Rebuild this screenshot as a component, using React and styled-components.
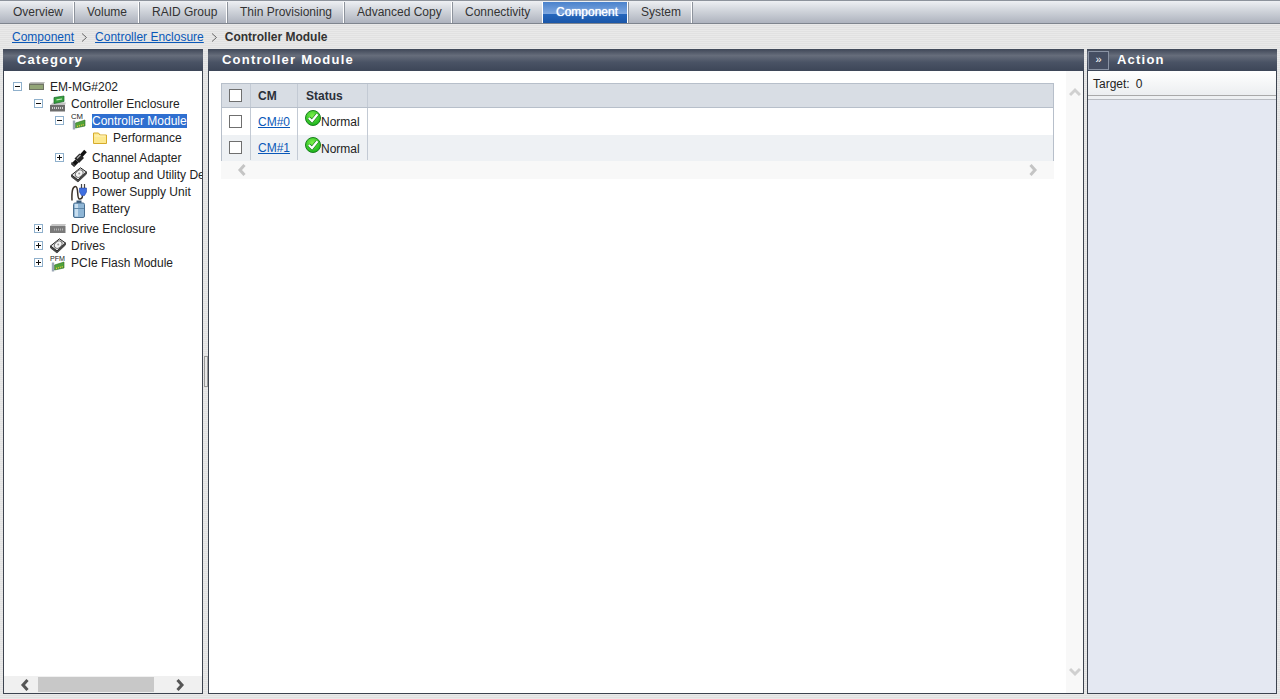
import React from 'react'
import styled, { createGlobalStyle } from 'styled-components'

const Global = createGlobalStyle`
  html, body { margin: 0; padding: 0; height: 100%; overflow: hidden; }
  body { font-family: "Liberation Sans", Arial, sans-serif; font-size: 12px; color: #222; }
`
const Page = styled.div`
  width: 1280px;
  height: 699px;
  display: flex;
  flex-direction: column;
  background: repeating-linear-gradient(#e9e9e9 0, #e9e9e9 1px, #e1e1e1 1px, #e1e1e1 2px);
`
const TabBar = styled.div`
  height: 24px;
  box-sizing: border-box;
  display: flex;
  padding-top: 1px;
  background: linear-gradient(#eef0f3 0, #d3d7dd 40%, #aeb3be 100%);
  border-top: 1px solid #8d939c;
  border-bottom: 1px solid #7f858e;
`
const Tab = styled.div`
  box-sizing: border-box;
  width: ${p => p.$w}px;
  display: flex;
  align-items: center;
  padding: 0 0 1px 13px;
  border-right: 1px solid #fff;
  box-shadow: 1px 0 0 #8d939c;
  color: ${p => (p.$active ? '#fff' : '#333')};
  text-shadow: ${p => (p.$active ? '0 0 1px #fff' : 'none')};
  background: ${p => (p.$active ? 'linear-gradient(#4a82cc 0, #7fa8e0 56%, #2566bc 58%, #1a56a8 100%)' : 'transparent')};
`
const Crumbs = styled.div`
  height: 25px;
  display: flex;
  align-items: center;
  padding: 1px 0 0 12px;
  box-sizing: border-box;
`
const CrumbLink = styled.a`
  color: #0a58b8;
  text-decoration: underline;
`
const CrumbSep = styled.svg`
  width: 7px;
  height: 9px;
  margin: 1px 7px 0 7px;
`
const CrumbNow = styled.span`
  font-weight: bold;
  color: #333;
`
const Panels = styled.div`
  display: flex;
  height: 645px;
  padding-left: 3px;
`
const Panel = styled.section`
  box-sizing: border-box;
  width: ${p => p.$w}px;
  height: 100%;
  border: 1px solid #3c434f;
  border-top: none;
  display: flex;
  flex-direction: column;
  background: ${p => p.$bg || '#fff'};
`
const Head = styled.header`
  height: 22px;
  box-sizing: border-box;
  flex: none;
  margin: 0 -1px;
  display: flex;
  align-items: center;
  padding: 0 0 2px ${p => p.$pad || 14}px;
  color: #fff;
  font-size: 13px;
  font-weight: bold;
  letter-spacing: 1.22px;
  background: linear-gradient(#3f4757 0, #666d7b 30%, #4a5365 60%, #3d4658 100%);
`
const Splitter = styled.div`
  width: 5px;
  flex: none;
  display: flex;
  align-items: center;
  justify-content: center;
`
const Grip = styled.div`
  width: 2px;
  height: 29px;
  border: 1px solid #999;
  background: #e8e8e8;
`
const Gap = styled.div`
  width: 3px;
  flex: none;
`
const TreeArea = styled.div`
  flex: 1;
  overflow: hidden;
  padding: 7px 0 0 9px;
`
const Group = styled.div`
  margin-bottom: ${p => p.$after || 0}px;
`
const Row = styled.div`
  height: 17px;
  display: flex;
  align-items: center;
  padding-left: ${p => p.$level * 21}px;
  white-space: nowrap;
`
const Toggle = styled.span`
  box-sizing: border-box;
  width: 9px;
  height: 9px;
  flex: none;
  border: 1px solid #8fb0cc;
  background: #fff;
  position: relative;
  &::before {
    content: '';
    position: absolute;
    left: 1px;
    top: 3px;
    width: 5px;
    height: 1px;
    background: #111;
  }
  &::after {
    content: '';
    display: ${p => (p.$open ? 'none' : 'block')};
    position: absolute;
    left: 3px;
    top: 1px;
    width: 1px;
    height: 5px;
    background: #111;
  }
`
const NoToggle = styled.span`
  width: 9px;
  flex: none;
`
const IconSlot = styled.span`
  width: 16px;
  height: 16px;
  flex: none;
  margin: 0 5px 0 7px;
  display: block;
  svg { display: block; overflow: visible; }
`
const Label = styled.span`
  line-height: 14px;
  margin-top: 1px;
  color: ${p => (p.$sel ? '#fff' : '#222')};
  background: ${p => (p.$sel ? '#2f6fd0' : 'transparent')};
`
const HScroll = styled.div`
  height: 17px;
  flex: none;
  display: flex;
  align-items: center;
  background: #f0f0f0;
  padding-left: 15px;
`
const ScrollThumb = styled.div`
  width: 116px;
  height: 15px;
  background: #c8c8c8;
  margin: 0 20px 0 7px;
`
const Arrow = styled.svg`
  width: 12px;
  height: 12px;
  flex: none;
`
const CenterBody = styled.div`
  flex: 1;
  display: flex;
  min-height: 0;
`
const CenterMain = styled.div`
  flex: 1;
  padding: 12px 12px 0 12px;
`
const VScroll = styled.div`
  width: 17px;
  flex: none;
  background: #f8f8f8;
  display: flex;
  flex-direction: column;
  justify-content: space-between;
  align-items: center;
  padding: 15px 0 15px;
  box-sizing: border-box;
`
const Grid = styled.div`
  border: 1px solid #b7bfca;
  border-bottom: none;
  width: 833px;
  box-sizing: border-box;
`
const GridRow = styled.div`
  display: flex;
  height: ${p => p.$h}px;
  box-sizing: border-box;
  background: ${p => p.$bg};
  border-bottom: ${p => p.$line ? '1px solid #b7bfca' : 'none'};
  padding-bottom: ${p => p.$nudge || 0}px;
`
const Cell = styled.div`
  box-sizing: border-box;
  width: ${p => p.$w}px;
  display: flex;
  align-items: center;
  padding-left: ${p => p.$pad || 0}px;
  padding-bottom: ${p => p.$lift || 0}px;
  border-right: 1px solid #c3cad4;
  font-weight: ${p => (p.$head ? 'bold' : 'normal')};
  color: ${p => (p.$head ? '#2b303a' : '#222')};
`
const Check = styled.span`
  box-sizing: border-box;
  width: 13px;
  height: 13px;
  background: #fff;
  border: 1px solid #6f6f6f;
  margin-left: 7px;
`
const CellLink = styled.a`
  color: #0a58b8;
  text-decoration: underline;
`
const StatusIcon = styled.svg`
  width: 16px;
  height: 16px;
  margin: -5px 0 0 -1px;
  flex: none;
`
const StatusText = styled.span`
  margin-top: 2px;
`
const GridScroll = styled.div`
  width: 833px;
  height: 18px;
  background: #f8f8f8;
  display: flex;
  align-items: center;
  padding: 0 15px 0 15px;
  box-sizing: border-box;
  justify-content: space-between;
`
const ActionHeadBtn = styled.span`
  box-sizing: border-box;
  width: 21px;
  height: 19px;
  margin: 2px 8px 0 0;
  border: 1px solid #8a93a4;
  background: #454e62;
  display: flex;
  align-items: center;
  justify-content: center;
  font-size: 11px;
  font-weight: normal;
  letter-spacing: 0;
  padding-bottom: 2px;
`
const Target = styled.div`
  height: 25px;
  flex: none;
  box-sizing: border-box;
  padding: 1px 0 0 5px;
  display: flex;
  align-items: center;
  gap: 6px;
  background: linear-gradient(#fff, #eceef0);
  border-bottom: 1px solid #a9a9a9;
`
const TargetEdge = styled.div`
  height: 3px;
  flex: none;
  background: #eef0f2;
  border-bottom: 1px solid #b9bcc2;
`

const Chevron = ({ dir, color }) => {
  const d = {
    left: 'M8.5 1 L4 6 L8.5 11',
    right: 'M3.5 1 L8 6 L3.5 11',
    up: 'M1 9 L6 4 L11 9',
    down: 'M1 3 L6 8 L11 3',
  }[dir]
  return (
    <Arrow viewBox="0 0 12 12">
      <path d={d} fill="none" stroke={color} strokeWidth="3" />
    </Arrow>
  )
}

const EnclosureIcon = () => (
  <svg width="16" height="16" viewBox="0 0 16 16">
    <path d="M0 9 L3 6.5 L16 6.5 L15 9 Z" fill="#c4c4c4" />
    <rect x="0" y="9" width="15" height="6.5" fill="#6d6d6d" />
    <path d="M2 12 H13" stroke="#cfcfcf" strokeWidth="2" strokeDasharray="1 1" />
    <path d="M4 1.5 L14 0 L14 5.5 L4 7.5 Z" fill="#37a03c" stroke="#17642a" strokeWidth=".7" />
    <path d="M6.5 3.8 L12 3" stroke="#c6ecc0" strokeWidth="1.2" />
  </svg>
)

const RackIcon = () => (
  <svg width="16" height="16" viewBox="0 0 16 16">
    <path d="M0 4.5 L1.5 3 L16 3 L15 4.5 Z" fill="#bdbdbd" />
    <rect x="0" y="4.5" width="15" height="6.5" fill="#6f7464" />
    <path d="M1.5 8 H14" stroke="#b6d68a" strokeWidth="4" strokeDasharray="1 1" />
  </svg>
)

const DriveBoxIcon = () => (
  <svg width="16" height="16" viewBox="0 0 16 16">
    <path d="M0 5 L2 3 L16 3 L15 5 Z" fill="#c6c6c6" />
    <rect x="0" y="5" width="15.5" height="7" fill="#7a7a7a" />
    <path d="M4 8.5 H13" stroke="#b4b4b4" strokeWidth="2" strokeDasharray="1 1" />
  </svg>
)

const CardIcon = ({ text, w }) => (
  <svg width="16" height="16" viewBox="0 0 16 16">
    <text x="0" y="6" fontSize="8" fontFamily="Liberation Sans" fill="#222" textLength={w} lengthAdjust="spacingAndGlyphs">{text}</text>
    <path d="M4.5 10 L14 7 L14 13 L4.5 15 Z" fill="#4fa23a" stroke="#2c6a20" strokeWidth=".6" />
    <path d="M3 7.5 V16.5" stroke="#9aa7b5" strokeWidth="2.4" />
    <path d="M6 13.5 L13 11.5" stroke="#e6c83c" strokeWidth="1.4" strokeDasharray="1 1" />
  </svg>
)

const FolderIcon = () => (
  <svg width="16" height="16" viewBox="0 0 16 16">
    <path d="M1.5 13.5 V3 H6.5 L8 5 H14.5 V13.5 Z" fill="#fde98f" stroke="#d6ab2c" />
    <path d="M2.5 6 H13.5" stroke="#fff4c0" />
  </svg>
)

const AdapterIcon = () => (
  <svg width="16" height="17" viewBox="0 0 16 17">
    <path d="M1.5 15.5 L6 11" stroke="#111" strokeWidth="4.5" />
    <path d="M10 6 L14.5 1" stroke="#111" strokeWidth="3.5" />
    <path d="M3.5 8.5 L8.5 3.5 L13 8 L8 13 Z" fill="#262626" />
    <path d="M6 8.5 L9.5 5" stroke="#aaa" strokeWidth="1.2" />
    <path d="M0.5 12.5 L4 16" stroke="#444" strokeWidth="1.5" />
  </svg>
)

const DiskIcon = () => (
  <svg width="16" height="16" viewBox="0 0 16 16">
    <path d="M.5 8 L9.5 .8 L15.5 5 L7 13 Z" fill="#dcdcdc" stroke="#222" />
    <path d="M.5 8 L.5 10 L7 15 L15.5 7 L15.5 5 L7 13 Z" fill="#4a4a4a" stroke="#222" strokeWidth=".6" />
    <ellipse cx="8.2" cy="6.6" rx="4.2" ry="3.2" fill="#f4f4f4" stroke="#666" transform="rotate(-38 8.2 6.6)" />
    <circle cx="8.2" cy="6.6" r="1" fill="#999" />
  </svg>
)

const PowerIcon = () => (
  <svg width="16" height="17" viewBox="0 0 16 17">
    <path d="M1 16.5 C.5 6 2 2.5 4.5 2.5 C8 2.5 5.5 15 8.5 15 C10.5 15 11.5 13.5 11.5 11.5" fill="none" stroke="#3b3128" strokeWidth="1.5" />
    <path d="M8.5 4 H15.5 V8 L13.5 11.5 H10.5 L8.5 8 Z" fill="#3f6fe0" stroke="#2545a5" strokeWidth=".6" />
    <path d="M10.5 4 V0 M13.5 4 V0" stroke="#444" strokeWidth="1.2" />
  </svg>
)

const BatteryIcon = () => (
  <svg width="16" height="17" viewBox="0 0 16 17">
    <rect x="5.5" y="-.5" width="5" height="2.5" fill="#3b5a78" />
    <rect x="2.5" y="2" width="11" height="14.5" rx="1.5" fill="#8fb6d6" stroke="#4a6f90" />
    <rect x="4" y="3" width="3" height="12.5" fill="#c8deef" />
    <path d="M3 7.5 H13" stroke="#5f87a8" />
  </svg>
)

const OkIcon = () => (
  <StatusIcon viewBox="0 0 16 16">
    <defs>
      <radialGradient id="okFill" cx="45%" cy="35%" r="70%">
        <stop offset="0" stopColor="#7cf04a" />
        <stop offset="1" stopColor="#12b018" />
      </radialGradient>
    </defs>
    <circle cx="8" cy="8" r="7.5" fill="url(#okFill)" stroke="#1a7f1f" />
    <path d="M3.8 8 L7 11 L12.5 4.2" fill="none" stroke="#0c6f14" strokeWidth="3.4" />
    <path d="M3.8 8 L7 11 L12.5 4.2" fill="none" stroke="#fff" strokeWidth="2.3" />
  </StatusIcon>
)

const TreeRow = ({ level, toggle, icon, label, sel }) => (
  <Row $level={level}>
    {toggle ? <Toggle $open={toggle === 'open'} /> : <NoToggle />}
    <IconSlot>{icon}</IconSlot>
    <Label $sel={sel}>{label}</Label>
  </Row>
)

const tabs = [
  ['Overview', 74], ['Volume', 65], ['RAID Group', 88], ['Thin Provisioning', 117],
  ['Advanced Copy', 108], ['Connectivity', 91], ['Component', 85, true], ['System', 64],
]

export default function App() {
  return (
    <Page>
      <Global />
      <TabBar>
        {tabs.map(([name, w, active]) => (
          <Tab key={name} $w={w} $active={active}>{name}</Tab>
        ))}
      </TabBar>
      <Crumbs>
        <CrumbLink>Component</CrumbLink>
        <CrumbSep viewBox="0 0 7 9"><path d="M1 .5 L5.5 4.5 L1 8.5" fill="none" stroke="#666" /></CrumbSep>
        <CrumbLink>Controller Enclosure</CrumbLink>
        <CrumbSep viewBox="0 0 7 9"><path d="M1 .5 L5.5 4.5 L1 8.5" fill="none" stroke="#666" /></CrumbSep>
        <CrumbNow>Controller Module</CrumbNow>
      </Crumbs>
      <Panels>
        <Panel $w={200}>
          <Head>Category</Head>
          <TreeArea>
            <TreeRow level={0} toggle="open" icon={<RackIcon />} label="EM-MG#202" />
            <TreeRow level={1} toggle="open" icon={<EnclosureIcon />} label="Controller Enclosure" />
            <TreeRow level={2} toggle="open" icon={<CardIcon text="CM" w={12} />} label="Controller Module" sel />
            <Group $after={3}>
              <TreeRow level={3} icon={<FolderIcon />} label="Performance" />
            </Group>
            <TreeRow level={2} toggle="closed" icon={<AdapterIcon />} label="Channel Adapter" />
            <TreeRow level={2} icon={<DiskIcon />} label="Bootup and Utility Device" />
            <TreeRow level={2} icon={<PowerIcon />} label="Power Supply Unit" />
            <Group $after={3}>
              <TreeRow level={2} icon={<BatteryIcon />} label="Battery" />
            </Group>
            <TreeRow level={1} toggle="closed" icon={<DriveBoxIcon />} label="Drive Enclosure" />
            <TreeRow level={1} toggle="closed" icon={<DiskIcon />} label="Drives" />
            <TreeRow level={1} toggle="closed" icon={<CardIcon text="PFM" w={15} />} label="PCIe Flash Module" />
          </TreeArea>
          <HScroll>
            <Chevron dir="left" color="#555" />
            <ScrollThumb />
            <Chevron dir="right" color="#555" />
          </HScroll>
        </Panel>
        <Splitter><Grip /></Splitter>
        <Panel $w={876}>
          <Head>Controller Module</Head>
          <CenterBody>
            <CenterMain>
              <Grid>
                <GridRow $h={24} $bg="#d8dde4" $line>
                  <Cell $w={29}><Check /></Cell>
                  <Cell $w={47} $pad={7} $head>CM</Cell>
                  <Cell $w={70} $pad={8} $head>Status</Cell>
                </GridRow>
                <GridRow $h={27} $bg="#fff">
                  <Cell $w={29}><Check /></Cell>
                  <Cell $w={47} $pad={7}><CellLink>CM#0</CellLink></Cell>
                  <Cell $w={70} $pad={8} $lift={2}><OkIcon /><StatusText>Normal</StatusText></Cell>
                </GridRow>
                <GridRow $h={26} $bg="#eef1f4" $nudge={1}>
                  <Cell $w={29}><Check /></Cell>
                  <Cell $w={47} $pad={7}><CellLink>CM#1</CellLink></Cell>
                  <Cell $w={70} $pad={8}><OkIcon /><StatusText>Normal</StatusText></Cell>
                </GridRow>
              </Grid>
              <GridScroll>
                <Chevron dir="left" color="#c4c4c4" />
                <Chevron dir="right" color="#c4c4c4" />
              </GridScroll>
            </CenterMain>
            <VScroll>
              <Chevron dir="up" color="#d0d0d0" />
              <Chevron dir="down" color="#d0d0d0" />
            </VScroll>
          </CenterBody>
        </Panel>
        <Gap />
        <Panel $w={190} $bg="#e4e8f2">
          <Head $pad={1}>
            <ActionHeadBtn>»</ActionHeadBtn>
            Action
          </Head>
          <Target><span>Target:</span><span>0</span></Target>
          <TargetEdge />
        </Panel>
      </Panels>
    </Page>
  )
}
